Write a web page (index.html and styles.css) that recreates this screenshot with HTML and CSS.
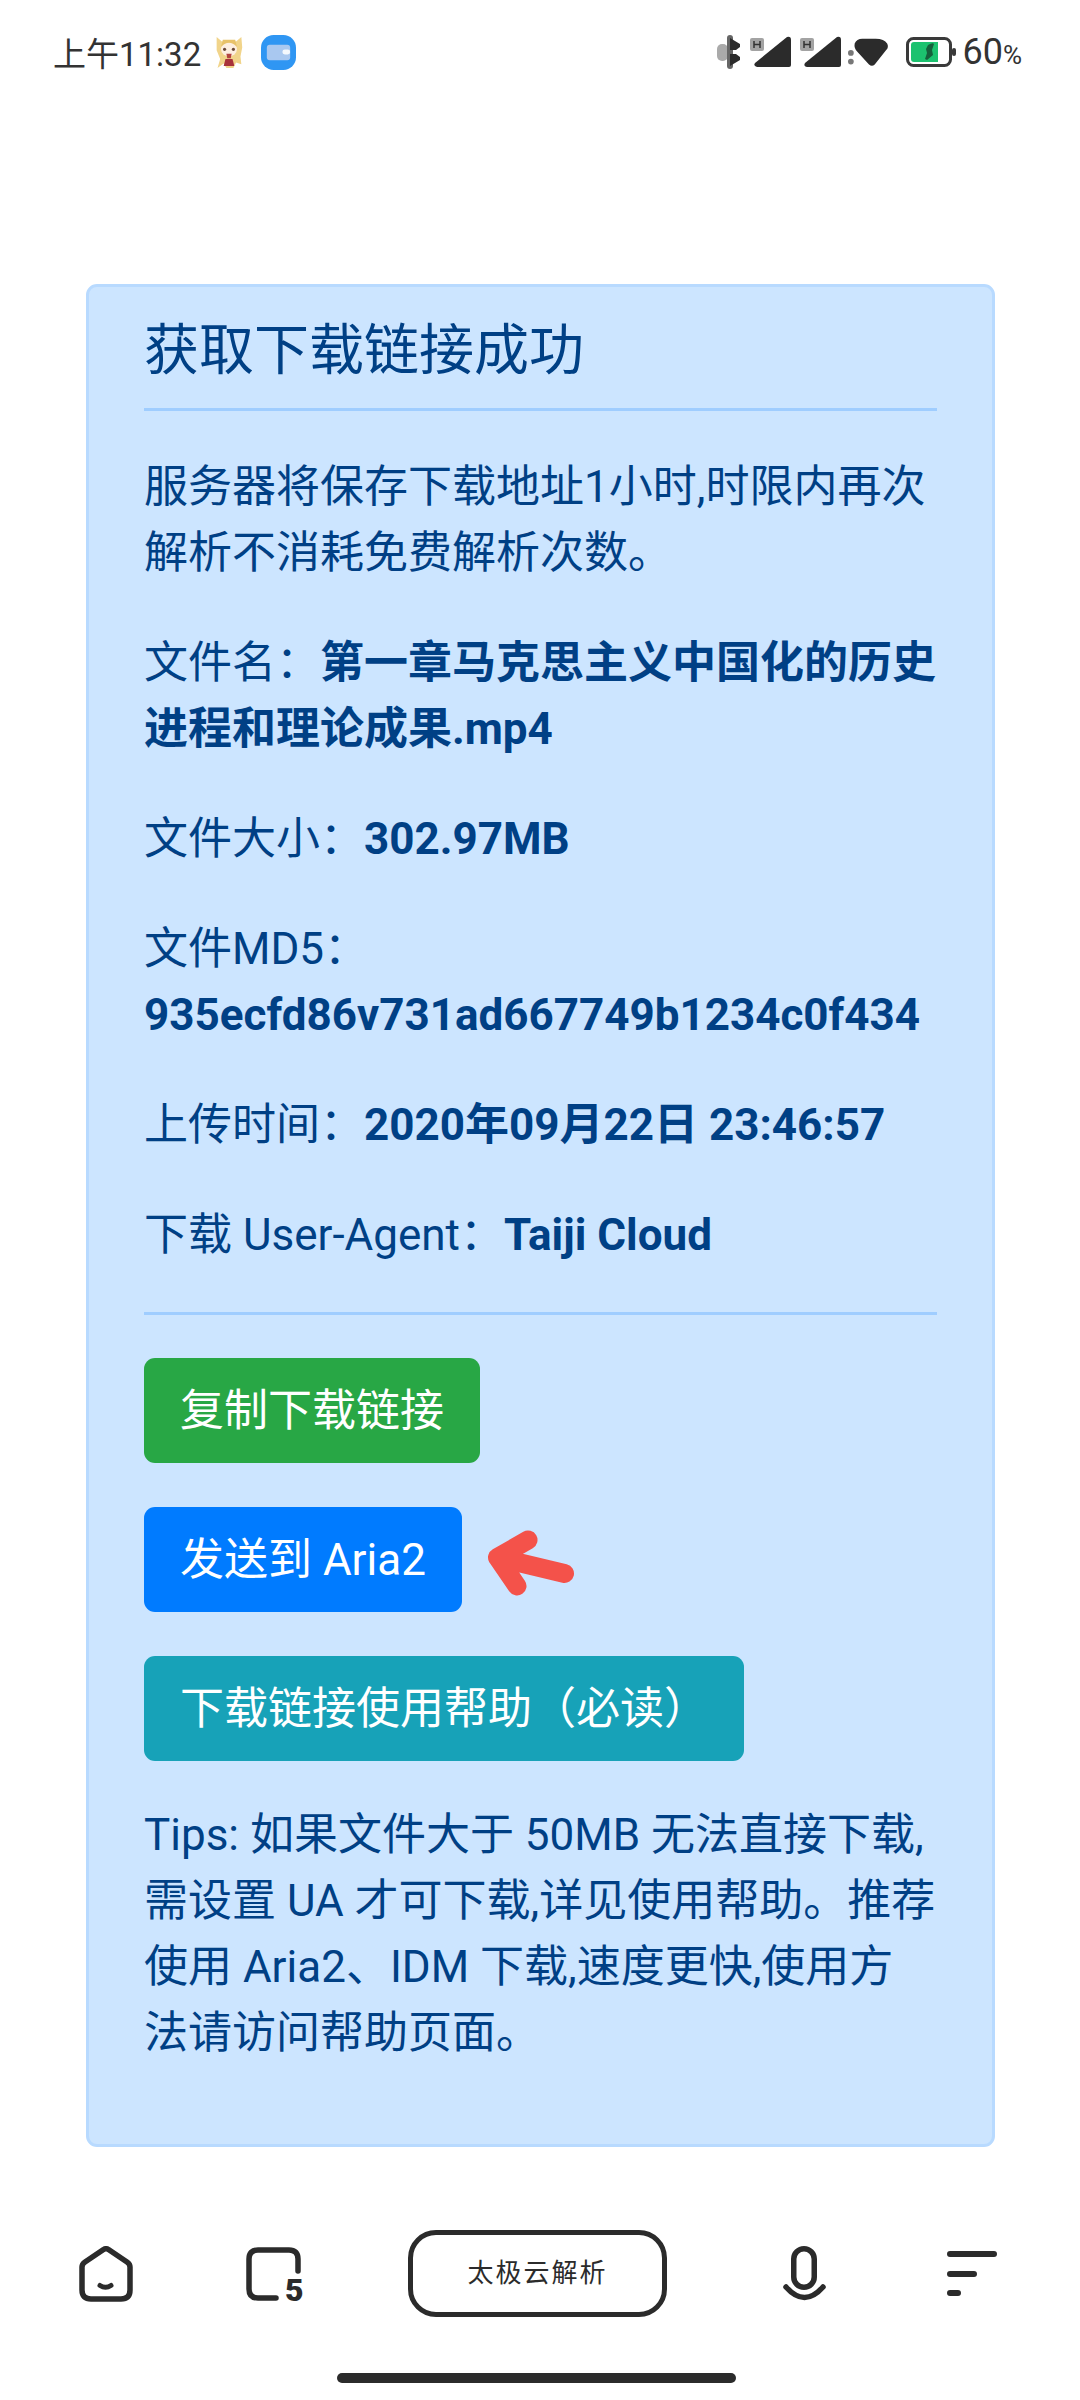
FILE: index.html
```html
<!DOCTYPE html>
<html lang="zh-CN">
<head>
    <meta charset="UTF-8">
    <meta name="viewport" content="width=device-width, initial-scale=1.0">
    <title>太极云解析</title>
    <link rel="stylesheet" href="styles.css">
</head>
<body>
    <div class="page">
        <!-- Status bar -->
        <header class="status-bar">
            <div class="status-left">
                <span class="status-time">上午11:32</span>
                <svg class="sticker" width="30" height="36" viewBox="0 0 34 38">
                    <path d="M3 2l6 5h16l6-5 1 12-2 10 1 9-6-2-3 6h-8l-3-5-7 5 3-10-4-10z" fill="#f1d48a"/>
                    <ellipse cx="17" cy="16" rx="9" ry="8" fill="#fdeee0"/>
                    <path d="M8 13q9-9 18 0l-2-8H10z" fill="#e8c26a"/>
                    <circle cx="12" cy="16" r="1.8" fill="#6b4a3a"/>
                    <circle cx="22" cy="16" r="1.8" fill="#6b4a3a"/>
                    <path d="M14 21h6l-1 5h-4z" fill="#b3433f"/>
                    <path d="M13 27h8l2 8h-12z" fill="#a8323a"/>
                </svg>
                <svg class="wallet" width="35" height="35" viewBox="0 0 36 36">
                    <rect width="36" height="36" rx="13" fill="#2f96f3"/>
                    <rect x="6" y="10" width="24" height="16" rx="3" fill="#a9c8f0"/>
                    <rect x="22" y="15" width="8" height="5" rx="2.5" fill="#f4f8fd"/>
                </svg>
            </div>
            <div class="status-right">
                <svg class="earbuds" width="26" height="34" viewBox="0 0 26 34">
                    <rect x="1" y="9" width="11" height="17" rx="5" fill="#aaa"/>
                    <rect x="11" y="0" width="6" height="34" rx="3" fill="#666"/>
                    <path d="M14 3l10 6v3l-4 3h-6zM14 19h6l4 3v3l-10 6z" fill="#2b2b2b"/>
                </svg>
                <svg class="signal" width="42" height="32" viewBox="0 0 42 32">
                    <rect x="0" y="2" width="14" height="13" rx="2" fill="#a3a3a3"/>
                    <path d="M4 5v7M10 5v7M4 8.500h6" stroke="#333" stroke-width="1.500"/>
                    <path d="M37 1q4-1 4 3v25q0 2-2 2H7q-4-1-2-4z" fill="#2b2b2b"/>
                </svg>
                <svg class="signal" width="42" height="32" viewBox="0 0 42 32">
                    <rect x="0" y="2" width="14" height="13" rx="2" fill="#a3a3a3"/>
                    <path d="M4 5v7M10 5v7M4 8.500h6" stroke="#333" stroke-width="1.500"/>
                    <path d="M37 1q4-1 4 3v25q0 2-2 2H7q-4-1-2-4z" fill="#2b2b2b"/>
                </svg>
                <svg class="wifi" width="42" height="32" viewBox="0 0 44 32">
                    <circle cx="3" cy="17" r="3" fill="#777"/>
                    <circle cx="3" cy="26" r="3" fill="#777"/>
                    <path d="M7 7q2-5 8-5h14q9 0 12 5 2 4-1 7L28 29q-3 3-6 0L10 16Q6 12 7 7z" fill="#2b2b2b"/>
                </svg>
                <svg class="battery" width="50" height="30" viewBox="0 0 50 30">
                    <rect x="1.500" y="1.500" width="43" height="27" rx="6" fill="#fff" stroke="#3a3a3a" stroke-width="3"/>
                    <path d="M5 8q0-3 3-3h24v20H8q-3 0-3-3z" fill="#1cc26f"/>
                    <path d="M22 8q5-3 6-1l-2 6 1 5-6 5-2-1 2-6-1-4z" fill="#16603c"/>
                    <rect x="46" y="11" width="4" height="8" rx="2" fill="#3a3a3a"/>
                </svg>
                <span class="status-level">60<small>%</small></span>
            </div>
        </header>

        <!-- Result card -->
        <main class="content">
            <section class="alert-card">
                <h5 class="alert-title">获取下载链接成功</h5>
                <hr class="rule rule-top">
                <p>服务器将保存下载地址1小时,时限内再次解析不消耗免费解析次数。</p>
                <p>文件名：<b>第一章马克思主义中国化的历史进程和理论成果.mp4</b></p>
                <p>文件大小：<b>302.97MB</b></p>
                <p>文件MD5：<b>935ecfd86v731ad667749b1234c0f434</b></p>
                <p>上传时间：<b>2020年09月22日 23:46:57</b></p>
                <p>下载 User-Agent：<b>Taiji Cloud</b></p>
                <hr class="rule">
                <div class="btn-row"><a class="btn btn-green">复制下载链接</a></div>
                <div class="btn-row">
                    <a class="btn btn-blue">发送到 Aria2</a>
                    <svg class="arrow" width="110" height="80" viewBox="0 0 110 80">
                        <path d="M83.500 49.500L16.500 33.500M47 16L16.500 33.500 36 62" fill="none" stroke="#f4524a" stroke-width="19" stroke-linecap="round" stroke-linejoin="round"/>
                    </svg>
                </div>
                <div class="btn-row btn-row-last"><a class="btn btn-cyan">下载链接使用帮助（必读）</a></div>
                <p>Tips: 如果文件大于 50MB 无法直接下载,需设置 UA 才可下载,详见使用帮助。推荐使用 Aria2、IDM 下载,速度更快,使用方法请访问帮助页面。</p>
            </section>
        </main>

        <!-- Browser toolbar -->
        <nav class="toolbar">
            <svg class="tool-home" width="54" height="56" viewBox="0 0 54 56">
                <path d="M24.500 3.500q2.500-1.500 5 0L48 16q3 2 3 5V44q0 9-9 9H12q-9 0-9-9V21q0-3 3-5z" fill="none" stroke="#2b2b2b" stroke-width="5.500" stroke-linejoin="round"/>
                <path d="M21 39.500q5.500 3.500 11 0" fill="none" stroke="#2b2b2b" stroke-width="5" stroke-linecap="round"/>
            </svg>
            <svg class="tool-tabs" width="58" height="74" viewBox="0 -10 58 74">
                <path d="M52 24V12q0-9-9-9H12q-9 0-9 9V42q0 9 9 9H30" fill="none" stroke="#2b2b2b" stroke-width="5.500" stroke-linecap="round"/>
                <text class="tab-count" x="39" y="54">5</text>
            </svg>
            <div class="url-pill">太极云解析</div>
            <svg class="tool-mic" width="43" height="55" viewBox="0 0 43 55">
                <rect x="10.750" y="2.750" width="20.500" height="38.500" rx="10.250" fill="none" stroke="#2b2b2b" stroke-width="5.500"/>
                <path d="M3 41Q21.500 62 40 41" fill="none" stroke="#2b2b2b" stroke-width="5.500" stroke-linecap="round"/>
            </svg>
            <svg class="tool-menu" width="50" height="46" viewBox="0 0 50 46">
                <path d="M3 3H47M3 23H27M3 42H11" fill="none" stroke="#2b2b2b" stroke-width="6" stroke-linecap="round"/>
            </svg>
        </nav>
        <div class="home-bar"><span></span></div>
    </div>
</body>
</html>
```

FILE: styles.css
```css
/* Global */
html, body {
    margin: 0;
    padding: 0;
    background: #fff;
}

.page {
    display: flex;
    flex-direction: column;
    width: 1080px;
    height: 2400px;
    overflow: hidden;
    font-family: Roboto, "Noto Sans CJK SC", sans-serif;
}

/* Status bar */
.status-bar {
    display: flex;
    justify-content: space-between;
    align-items: center;
    height: 104px;
    padding: 0 58px 0 53px;
    color: #333;
}

.status-left, .status-right {
    display: flex;
    align-items: center;
}

.status-time {
    font-size: 33px;
}

.sticker {
    margin-left: 13px;
}

.wallet {
    margin-left: 17px;
}

.signal {
    margin-left: 8px;
}

.wifi {
    margin-left: 6px;
}

.battery {
    margin: 0 6px 0 16px;
}

.status-level {
    font-size: 36px;
}

.status-level small {
    font-size: 26px;
}

/* Card */
.content {
    padding: 180px 85px 0 86px;
}

.alert-card {
    height: 1863px;
    box-sizing: border-box;
    padding: 30px 55px;
    background: #cce5ff;
    border: 3px solid #b8daff;
    border-radius: 11px;
    color: #004085;
    font-size: 44px;
    line-height: 66px;
}

.alert-title {
    margin: 0 0 25px;
    font-size: 55px;
    font-weight: 400;
    line-height: 66px;
}

.alert-card p {
    margin: 0 0 44px;
}

.alert-card b {
    font-weight: 700;
}

.rule {
    height: 3px;
    margin: 44px 0 43px;
    border: 0;
    background: #9fcdff;
}

.rule-top {
    margin: 0 0 43px;
}

/* Buttons */
.btn-row {
    display: flex;
    align-items: center;
    margin-bottom: 44px;
}

.btn-row-last {
    margin-bottom: 41px;
}

.btn {
    padding: 16.5px 33px;
    border: 3px solid transparent;
    border-radius: 11px;
    color: #fff;
}

.btn-green {
    background: #28a745;
}

.btn-blue {
    background: #007bff;
}

.btn-cyan {
    background: #17a2b8;
}

.arrow {
    margin: 8px 0 0 19px;
}

/* Toolbar */
.toolbar {
    display: flex;
    align-items: center;
    margin-top: 83px;
    padding-left: 79px;
}

.tool-tabs {
    margin-left: 113px;
}

.url-pill {
    width: 259px;
    height: 87px;
    box-sizing: border-box;
    margin-left: 104px;
    border: 5.5px solid #2b2b2b;
    border-radius: 28px;
    color: #2b2b2b;
    font-size: 26px;
    letter-spacing: 2px;
    line-height: 76px;
    text-align: center;
}

.tool-mic {
    margin-left: 116px;
}

.tool-menu {
    margin-left: 121px;
}

.tab-count {
    font-family: Roboto, sans-serif;
    font-size: 32px;
    font-weight: 900;
    fill: #2b2b2b;
}

.home-bar {
    display: flex;
    justify-content: center;
    margin-top: 56px;
    padding-right: 7px;
}

.home-bar span {
    width: 399px;
    height: 10px;
    border-radius: 5px;
    background: #2b2b2b;
}
```
